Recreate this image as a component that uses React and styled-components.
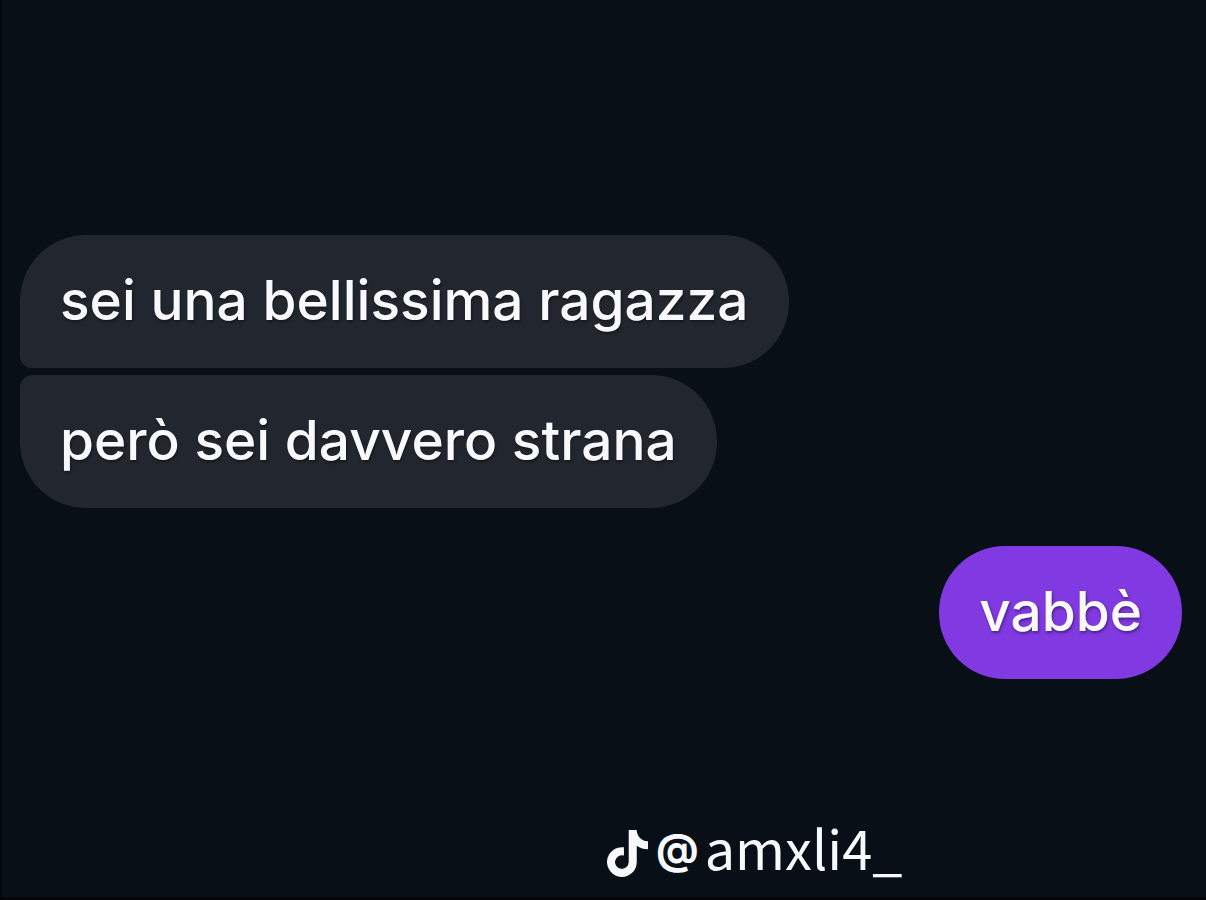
import React from 'react';
import styled, { createGlobalStyle } from 'styled-components';

const colors = {
  page: '#080f17',
  received: '#22272f',
  sent: '#8139e2',
  text: '#f7f9fd',
};

const GlobalStyle = createGlobalStyle`
  * {
    box-sizing: border-box;
  }

  body {
    margin: 0;
    background-color: ${colors.page};
  }
`;

const Page = styled.div`
  min-height: 100vh;
  display: flex;
  flex-direction: column;
  justify-content: space-between;
  padding: 235px 24px 12px 18px;
  border-left: 2px solid #04070d;
  border-bottom: 3px solid #05060c;
  color: ${colors.text};
`;

const Thread = styled.main`
  display: flex;
  flex-direction: column;
  gap: 38px;
`;

const Group = styled.div`
  display: flex;
  flex-direction: column;
  align-items: ${({ $sent }) => ($sent ? 'flex-end' : 'flex-start')};
  gap: 7px;
`;

const Bubble = styled.p`
  margin: 0;
  padding: 32px 40px 34px;
  border-radius: ${({ $radius }) => $radius || '66px'};
  background-color: ${({ $sent }) => ($sent ? colors.sent : colors.received)};
  font-family: Inter, sans-serif;
  font-size: 55px;
  font-weight: 500;
  line-height: 67px;
  text-shadow: 1px 2px 3px rgba(0, 0, 0, 0.4);
`;

const Watermark = styled.footer`
  display: flex;
  align-items: center;
  margin-left: 50%;
  padding-left: 6px;
`;

const Logo = styled.svg`
  width: 41px;
  height: 47px;
  margin-right: 8px;
`;

const At = styled.span`
  padding: 0 6px 8px 0;
  font-family: Inter, sans-serif;
  font-size: 42px;
  font-weight: 700;
  line-height: 56px;
`;

const Handle = styled.span`
  padding-bottom: 12px;
  font-family: 'Noto Sans CJK SC', sans-serif;
  font-size: 54px;
  line-height: 52px;
`;

function App() {
  return (
    <>
      <GlobalStyle />
      <Page>
        <Thread>
          <Group>
            <Bubble $radius="66px 66px 66px 12px">sei una bellissima ragazza</Bubble>
            <Bubble $radius="12px 66px 66px 66px">però sei davvero strana</Bubble>
          </Group>
          <Group $sent>
            <Bubble $sent>vabbè</Bubble>
          </Group>
        </Thread>
        <Watermark>
          <Logo viewBox="0 0 448 512" fill="currentColor" aria-hidden="true">
            <path d="M448 209.900a210.100 210.100 0 0 1-122.800-39.300V349.400A162.600 162.600 0 1 1 185 188.300V278.200a74.600 74.600 0 1 0 52.200 71.200V0h88a121.200 121.200 0 0 0 1.900 22.200 122.200 122.200 0 0 0 53.900 80.200A121.400 121.400 0 0 0 448 122.500Z" />
          </Logo>
          <At>@</At>
          <Handle>amxli4_</Handle>
        </Watermark>
      </Page>
    </>
  );
}

export default App;
